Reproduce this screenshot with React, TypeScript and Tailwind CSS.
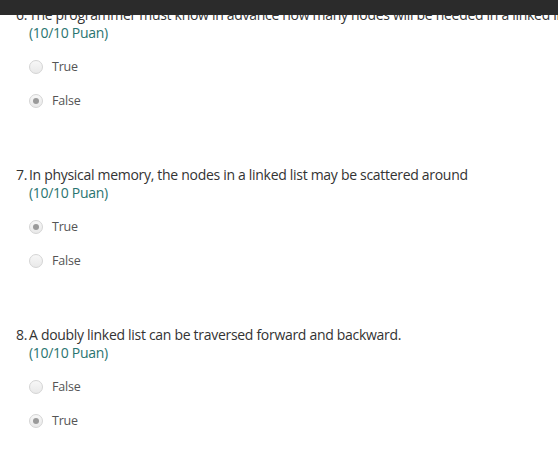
import React from "react";

type Q = { n: string; text: string; options: { label: string; checked: boolean }[] };

const questions: Q[] = [
  {
    n: "6.",
    text: "The programmer must know in advance how many nodes will be needed in a linked list",
    options: [
      { label: "True", checked: false },
      { label: "False", checked: true },
    ],
  },
  {
    n: "7.",
    text: "In physical memory, the nodes in a linked list may be scattered around",
    options: [
      { label: "True", checked: true },
      { label: "False", checked: false },
    ],
  },
  {
    n: "8.",
    text: "A doubly linked list can be traversed forward and backward.",
    options: [
      { label: "False", checked: false },
      { label: "True", checked: true },
    ],
  },
];

function Radio({ checked }: { checked: boolean }) {
  return (
    <span className="flex h-[14px] w-[14px] items-center justify-center rounded-full border border-[#d4d4d4] bg-gradient-to-b from-[#f7f7f7] to-[#e9e9e9]">
      {checked && <span className="h-[6px] w-[6px] rounded-full bg-[#9a9a9a]" />}
    </span>
  );
}

export default function App() {
  return (
    <div
      className="relative h-[460px] w-[558px] overflow-hidden bg-white"
      style={{ fontFamily: '"Open Sans", "Noto Sans", sans-serif' }}
    >
      <div className="absolute left-0 top-0 z-10 h-[15px] w-full bg-[#2b2b2b]" />
      <div className="flex flex-col pl-[16px] pt-[6px]">
        {questions.map((q) => (
          <div key={q.n} className="flex h-[160px] flex-col">
            <div className="flex h-[18px] items-center whitespace-nowrap text-[14px] leading-[18px] tracking-[-0.3px] text-[#333]">
              <span className="w-[13px] shrink-0">{q.n}</span>
              <span>{q.text}</span>
            </div>
            <div className="flex h-[18px] items-center pl-[13px] text-[14px] leading-[18px] tracking-[-0.3px] text-[#2a7470]">
              (10/10 Puan)
            </div>
            <div className="mt-[8px] flex flex-col pl-[13px]">
              {q.options.map((o) => (
                <div key={o.label} className="flex h-[34px] items-center">
                  <Radio checked={o.checked} />
                  <span className="ml-[9px] text-[12.5px] tracking-[-0.2px] text-[#555]">{o.label}</span>
                </div>
              ))}
            </div>
          </div>
        ))}
      </div>
    </div>
  );
}
